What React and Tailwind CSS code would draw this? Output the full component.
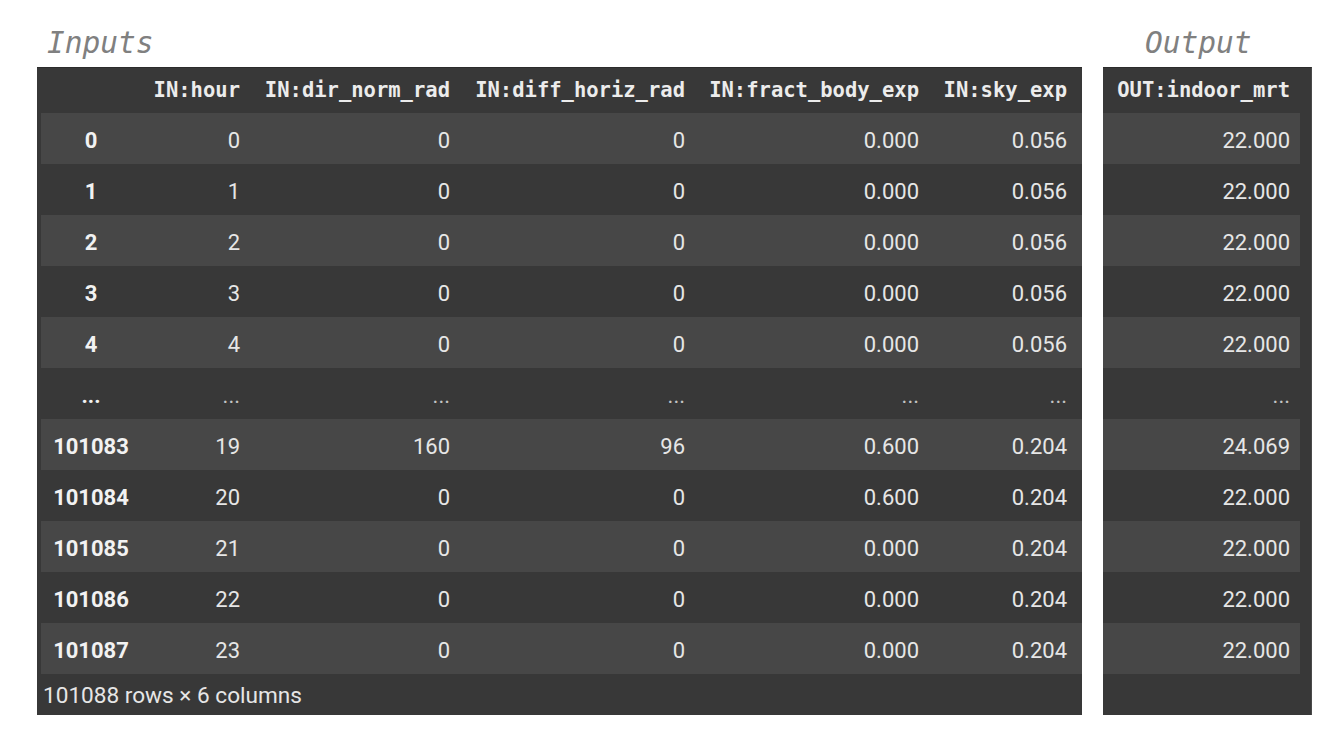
import React from "react";

const rows = [
  { idx: "0", v: ["0", "0", "0", "0.000", "0.056"], out: "22.000" },
  { idx: "1", v: ["1", "0", "0", "0.000", "0.056"], out: "22.000" },
  { idx: "2", v: ["2", "0", "0", "0.000", "0.056"], out: "22.000" },
  { idx: "3", v: ["3", "0", "0", "0.000", "0.056"], out: "22.000" },
  { idx: "4", v: ["4", "0", "0", "0.000", "0.056"], out: "22.000" },
  { idx: "...", v: ["...", "...", "...", "...", "..."], out: "...", ell: true },
  { idx: "101083", v: ["19", "160", "96", "0.600", "0.204"], out: "24.069" },
  { idx: "101084", v: ["20", "0", "0", "0.600", "0.204"], out: "22.000" },
  { idx: "101085", v: ["21", "0", "0", "0.000", "0.204"], out: "22.000" },
  { idx: "101086", v: ["22", "0", "0", "0.000", "0.204"], out: "22.000" },
  { idx: "101087", v: ["23", "0", "0", "0.000", "0.204"], out: "22.000" },
];

const headers = ["IN:hour", "IN:dir_norm_rad", "IN:diff_horiz_rad", "IN:fract_body_exp", "IN:sky_exp"];
const colW = ["w-[114px]", "w-[210px]", "w-[235px]", "w-[234px]", "w-[148px]"];

const mono = { fontFamily: '"DejaVu Sans Mono", monospace' };
const roboto = { fontFamily: 'Roboto, "Liberation Sans", sans-serif' };

export default function App() {
  return (
    <div className="w-[1338px] h-[736px] bg-white flex pl-[37px] gap-[21px]" style={roboto}>
      {/* Inputs */}
      <div className="flex flex-col w-[1045px]">
        <div className="h-[67px] pt-[25px] pl-[10px]">
          <div className="text-[29.5px] leading-[36px] italic text-[#808080]" style={mono}>
            Inputs
          </div>
        </div>
        <div className="bg-[#383838] border-t border-[#2c2c2c] h-[648px] flex flex-col">
          <div className="flex h-[45px] items-center ml-[4px] text-[20.5px] font-bold text-[#ececec]" style={mono}>
            <div className="w-[100px]" />
            {headers.map((h, i) => (
              <div key={h} className={`${colW[i]} text-right pr-[15px] whitespace-nowrap`}>
                {h}
              </div>
            ))}
          </div>
          {rows.map((r, ri) => (
            <div
              key={ri}
              className={`flex h-[51px] items-center pt-[3px] ml-[4px] text-[22px] text-[#e6e6e6] ${
                ri % 2 === 0 ? "bg-[#474747]" : ""
              }`}
            >
              <div className={`w-[100px] text-center font-bold text-[#f2f2f2] ${r.ell ? "text-[#cfcfcf]" : ""}`}>
                {r.idx}
              </div>
              {r.v.map((v, i) => (
                <div key={i} className={`${colW[i]} text-right pr-[15px] ${r.ell ? "text-[#c4c4c4]" : ""}`}>
                  {v}
                </div>
              ))}
            </div>
          ))}
          <div className="flex-1 flex items-center pt-[3px] pl-[6px] text-[22.6px] text-[#e6e6e6]">
            101088 rows × 6 columns
          </div>
        </div>
      </div>

      {/* Output */}
      <div className="flex flex-col w-[209px]">
        <div className="h-[67px] pt-[25px] pl-[42px]">
          <div className="text-[29.5px] leading-[36px] italic text-[#808080]" style={mono}>
            Output
          </div>
        </div>
        <div className="bg-[#383838] border-t border-[#2c2c2c] border-r border-r-[#4a4a4a] h-[648px] flex flex-col">
          <div className="flex h-[45px] items-center mr-[11px] text-[20.5px] font-bold text-[#ececec]" style={mono}>
            <div className="w-full text-right pr-[10px] whitespace-nowrap">OUT:indoor_mrt</div>
          </div>
          {rows.map((r, ri) => (
            <div
              key={ri}
              className={`flex h-[51px] items-center pt-[3px] mr-[11px] text-[22px] text-[#e6e6e6] ${
                ri % 2 === 0 ? "bg-[#474747]" : ""
              }`}
            >
              <div className={`w-full text-right pr-[10px] ${r.ell ? "text-[#c4c4c4]" : ""}`}>{r.out}</div>
            </div>
          ))}
          <div className="flex-1" />
        </div>
      </div>
    </div>
  );
}
